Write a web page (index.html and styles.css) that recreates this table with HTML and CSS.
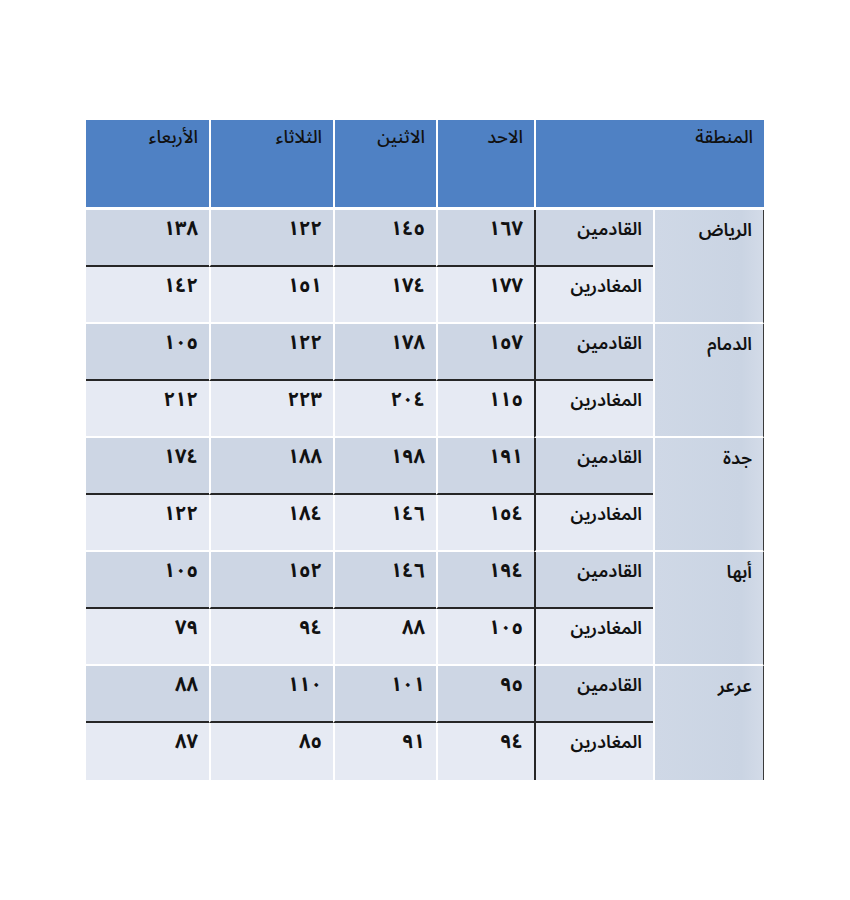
FILE: index.html
```html
<!DOCTYPE html>
<html lang="ar" dir="rtl">
<head>
<meta charset="utf-8">
<title>جدول القادمين والمغادرين</title>
<link rel="stylesheet" href="styles.css">
</head>
<body>
<div class="sheet">
  <div class="grid">
    <div class="cell head span2">المنطقة</div>
    <div class="cell head">الاحد</div>
    <div class="cell head">الاثنين</div>
    <div class="cell head">الثلاثاء</div>
    <div class="cell head last">الأربعاء</div>

    <div class="cell region">الرياض</div>
    <div class="cell type arr">القادمين</div>
    <div class="cell num arr">١٦٧</div>
    <div class="cell num arr">١٤٥</div>
    <div class="cell num arr">١٢٢</div>
    <div class="cell num arr last">١٣٨</div>
    <div class="cell type dep">المغادرين</div>
    <div class="cell num dep">١٧٧</div>
    <div class="cell num dep">١٧٤</div>
    <div class="cell num dep">١٥١</div>
    <div class="cell num dep last">١٤٢</div>

    <div class="cell region">الدمام</div>
    <div class="cell type arr">القادمين</div>
    <div class="cell num arr">١٥٧</div>
    <div class="cell num arr">١٧٨</div>
    <div class="cell num arr">١٢٢</div>
    <div class="cell num arr last">١٠٥</div>
    <div class="cell type dep">المغادرين</div>
    <div class="cell num dep">١١٥</div>
    <div class="cell num dep">٢٠٤</div>
    <div class="cell num dep">٢٢٣</div>
    <div class="cell num dep last">٢١٢</div>

    <div class="cell region">جدة</div>
    <div class="cell type arr">القادمين</div>
    <div class="cell num arr">١٩١</div>
    <div class="cell num arr">١٩٨</div>
    <div class="cell num arr">١٨٨</div>
    <div class="cell num arr last">١٧٤</div>
    <div class="cell type dep">المغادرين</div>
    <div class="cell num dep">١٥٤</div>
    <div class="cell num dep">١٤٦</div>
    <div class="cell num dep">١٨٤</div>
    <div class="cell num dep last">١٢٢</div>

    <div class="cell region">أبها</div>
    <div class="cell type arr">القادمين</div>
    <div class="cell num arr">١٩٤</div>
    <div class="cell num arr">١٤٦</div>
    <div class="cell num arr">١٥٢</div>
    <div class="cell num arr last">١٠٥</div>
    <div class="cell type dep">المغادرين</div>
    <div class="cell num dep">١٠٥</div>
    <div class="cell num dep">٨٨</div>
    <div class="cell num dep">٩٤</div>
    <div class="cell num dep last">٧٩</div>

    <div class="cell region final">عرعر</div>
    <div class="cell type arr">القادمين</div>
    <div class="cell num arr">٩٥</div>
    <div class="cell num arr">١٠١</div>
    <div class="cell num arr">١١٠</div>
    <div class="cell num arr last">٨٨</div>
    <div class="cell type dep final">المغادرين</div>
    <div class="cell num dep final">٩٤</div>
    <div class="cell num dep final">٩١</div>
    <div class="cell num dep final">٨٥</div>
    <div class="cell num dep final last">٨٧</div>
  </div>
</div>
</body>
</html>
```

FILE: styles.css
```css
html, body {
  margin: 0;
  padding: 0;
  background: #ffffff;
}

body {
  font-family: "Noto Sans Arabic", "DejaVu Sans", sans-serif;
  color: #111111;
}

.sheet {
  padding: 120px 0 0 86px;
  direction: ltr;
}

.grid {
  direction: rtl;
  width: 678px;
  display: grid;
  grid-template-columns: 111px 119px 98px 103px 124px 123px;
  grid-template-rows: 90px repeat(10, 57px);
}

.cell {
  box-sizing: border-box;
  padding: 7px 11px 0 6px;
  font-size: 18px;
  line-height: 24px;
  font-weight: 600;
  text-align: right;
  border-left: 2px solid #ffffff;
  white-space: nowrap;
}

.cell.last {
  border-left: 0;
}

.head {
  background: #4f81c4;
  border-bottom: 3px solid #ffffff;
  padding-top: 5px;
  font-weight: 500;
}

.span2 {
  grid-column: span 2;
}

.region {
  grid-row: span 2;
  background: linear-gradient(90deg, #cfd8e6 0%, #cad4e3 80%, #d3dbe8 100%);
  border-right: 1px solid #3a3a3a;
  border-bottom: 2px solid #ffffff;
  padding-top: 8px;
}

.arr {
  background: #cdd6e4;
  border-bottom: 2px solid #262626;
}

.dep {
  background: #e6eaf3;
  border-bottom: 2px solid #ffffff;
}

.type {
  border-left: 2px solid #262626;
}

.num {
  font-size: 20px;
  font-weight: 700;
}

.final {
  border-bottom: 0;
}
```
